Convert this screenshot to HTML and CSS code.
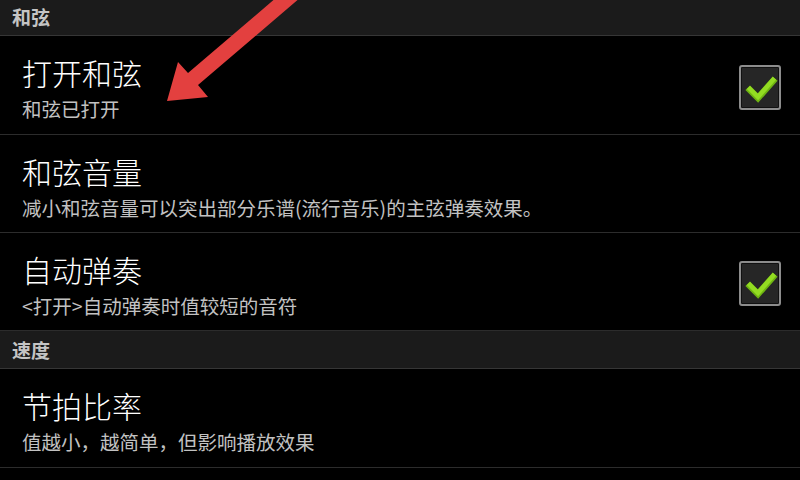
FILE: index.html
```html
<!DOCTYPE html>
<html lang="zh-CN">
    <head>
        <meta charset="UTF-8" />
        <meta name="viewport" content="width=device-width, initial-scale=1.0" />
        <title>和弦设置</title>
        <link rel="stylesheet" href="styles.css">
    </head>
    <body>
        <div class="settings">
            <div class="section-title">和弦</div>

            <div class="pref">
                <div class="pref-text">
                    <div class="pref-name">打开和弦</div>
                    <div class="pref-desc">和弦已打开</div>
                </div>
                <span class="check">
                    <svg viewBox="0 0 38 41" width="38" height="41">
                        <polyline points="9,23 17,31 32,14" fill="none" stroke="#6fb512" stroke-width="6.5" stroke-linecap="square" />
                        <polyline points="9,22 17,30 32,13" fill="none" stroke="#93dc22" stroke-width="4.5" stroke-linecap="square" />
                    </svg>
                </span>
            </div>

            <div class="pref">
                <div class="pref-text">
                    <div class="pref-name">和弦音量</div>
                    <div class="pref-desc">减小和弦音量可以突出部分乐谱(流行音乐)的主弦弹奏效果。</div>
                </div>
            </div>

            <div class="pref">
                <div class="pref-text">
                    <div class="pref-name">自动弹奏</div>
                    <div class="pref-desc">&lt;打开&gt;自动弹奏时值较短的音符</div>
                </div>
                <span class="check">
                    <svg viewBox="0 0 38 41" width="38" height="41">
                        <polyline points="9,23 17,31 32,14" fill="none" stroke="#6fb512" stroke-width="6.5" stroke-linecap="square" />
                        <polyline points="9,22 17,30 32,13" fill="none" stroke="#93dc22" stroke-width="4.5" stroke-linecap="square" />
                    </svg>
                </span>
            </div>

            <div class="section-title">速度</div>

            <div class="pref">
                <div class="pref-text">
                    <div class="pref-name">节拍比率</div>
                    <div class="pref-desc">值越小，越简单，但影响播放效果</div>
                </div>
            </div>
        </div>

        <!-- 标注箭头 -->
        <svg class="hint-arrow" viewBox="0 0 360 120" width="360" height="120">
            <polygon fill="#e3403f"
                points="167,101 178,62 188,73 325,-44 335,-32 198,85 208,97" />
        </svg>
    </body>
</html>
```

FILE: styles.css
```css
body {
    margin: 0;
    background-color: #000;
    font-family: "Noto Sans CJK SC", "Noto Sans", sans-serif;
    overflow: hidden;
}

.settings {
    margin-top: -2px;
}

/* 分组标题 */
.section-title {
    height: 37px;
    line-height: 37px;
    padding-left: 12px;
    background-color: #1b1b1b;
    border-bottom: 1px solid #363636;
    color: #c4c4c4;
    font-size: 19px;
    font-weight: bold;
}

/* 设置项 */
.pref {
    display: flex;
    align-items: center;
    height: 97px;
    padding: 0 19px 0 22px;
    border-bottom: 1px solid #2c2c2c;
    box-sizing: content-box;
}

.section-title + .pref {
    height: 98px;
}

.pref-text {
    flex: 1;
    align-self: flex-start;
    padding-top: 18px;
}

.pref-name {
    color: #fff;
    font-size: 30px;
    font-weight: 300;
    line-height: 36px;
}

.pref-desc {
    margin-top: 6px;
    color: #c2c2c2;
    font-size: 19.5px;
    line-height: 26px;
}

/* 复选框 */
.check {
    display: flex;
    align-items: center;
    justify-content: center;
    width: 38px;
    height: 41px;
    margin-top: 4px;
    border: 2px solid #8c8c8c;
    border-radius: 3px;
    background-color: #262626;
    box-shadow: inset 0 0 0 1px #111;
}

.hint-arrow {
    position: absolute;
    top: 0;
    left: 0;
}
```
